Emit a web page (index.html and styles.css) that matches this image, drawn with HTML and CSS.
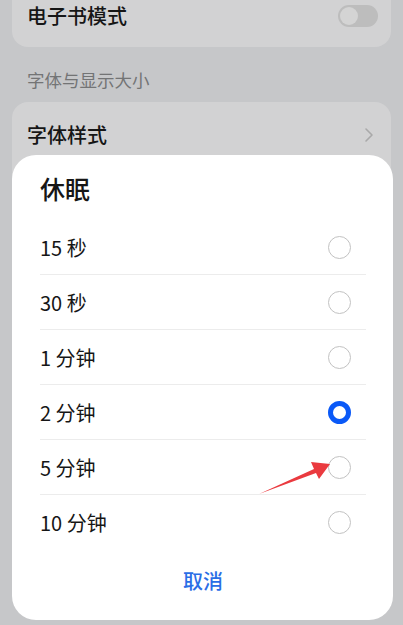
FILE: index.html
```html
<!DOCTYPE html>
<html lang="zh-CN">
<head>
    <meta charset="UTF-8">
    <meta name="viewport" content="width=device-width, initial-scale=1.0">
    <title>休眠</title>
    <link rel="stylesheet" href="styles.css">
</head>
<body>

<div class="settings">
    <div class="card card-top">
        <span class="item-label">电子书模式</span>
        <span class="switch"><span class="knob"></span></span>
    </div>

    <div class="section-title">字体与显示大小</div>

    <div class="card card-font">
        <span class="item-label">字体样式</span>
        <svg class="chevron" width="10" height="16" viewBox="0 0 10 16">
            <path d="M2 2 L8 8 L2 14" fill="none" stroke="#a9a9a9" stroke-width="1.6" stroke-linecap="round" stroke-linejoin="round"/>
        </svg>
    </div>
</div>

<!-- sleep dialog -->
<div class="dialog">
    <h3 class="dialog-title">休眠</h3>
    <ul class="options">
        <li class="option"><span>15 秒</span><span class="radio"></span></li>
        <li class="option"><span>30 秒</span><span class="radio"></span></li>
        <li class="option"><span>1 分钟</span><span class="radio"></span></li>
        <li class="option"><span>2 分钟</span><span class="radio checked"></span></li>
        <li class="option"><span>5 分钟</span><span class="radio"></span></li>
        <li class="option"><span>10 分钟</span><span class="radio"></span></li>
    </ul>
    <button class="cancel-btn">取消</button>
</div>

<svg class="arrow" width="403" height="625" viewBox="0 0 403 625">
    <polygon points="259,494 314,469 311,462 330,464 319,479 316,473" fill="#ea3a3f"/>
</svg>

</body>
</html>
```

FILE: styles.css
```css
body {
    margin: 0;
    padding: 0;
    width: 403px;
    height: 625px;
    overflow: hidden;
    position: relative;
    background-color: #c6c7c9;
    font-family: "Noto Sans CJK SC", "Noto Sans", sans-serif;
    color: #161616;
}
.settings {
    padding: 0 12px;
}
.card {
    background-color: #d2d2d3;
    border-radius: 16px;
    display: flex;
    align-items: center;
    justify-content: space-between;
    padding: 0 15px;
}
.card-top {
    padding-bottom: 15px;
    height: 32px;
    border-radius: 0 0 16px 16px;
}
.card-font {
    height: 66px;
    padding-bottom: 40px;
}
.item-label {
    font-size: 20px;
    font-weight: 500;
    line-height: 32px;
}
.switch {
    width: 40px;
    height: 22px;
    border-radius: 11px;
    background-color: #bdbdbd;
    margin-right: -2px;
    display: flex;
    align-items: center;
    padding-left: 2px;
    box-sizing: border-box;
}
.knob {
    width: 18px;
    height: 18px;
    border-radius: 50%;
    background-color: #d4d4d4;
}
.chevron {
    margin-right: 2px;
}
.section-title {
    font-size: 17.5px;
    color: #737475;
    line-height: 24px;
    padding: 21px 15px 10px;
}

/* Dialog */
.dialog {
    position: absolute;
    top: 155px;
    left: 12px;
    width: 381px;
    height: 465px;
    background-color: #fff;
    border-radius: 24px;
    padding: 0 27px 0 28px;
    box-sizing: border-box;
}
.dialog-title {
    margin: 0;
    font-size: 25px;
    font-weight: 500;
    line-height: 34px;
    padding: 16px 0 15px;
}
.options {
    list-style: none;
    margin: 0;
    padding: 0;
}
.option {
    height: 55px;
    display: flex;
    align-items: center;
    justify-content: space-between;
    font-size: 20px;
    padding-right: 15px;
    border-bottom: 1px solid #ececec;
    box-sizing: border-box;
}
.option:last-child {
    border-bottom: none;
}
.radio {
    width: 23px;
    height: 23px;
    border-radius: 50%;
    border: 1.5px solid #c2c2c2;
    box-sizing: border-box;
}
.radio.checked {
    border: 5px solid #0a59f7;
}
.cancel-btn {
    display: block;
    margin: 11px auto 0;
    background: none;
    border: none;
    font-family: inherit;
    font-size: 20px;
    font-weight: 500;
    color: #2a6ee6;
    padding: 0;
    line-height: 40px;
}
.arrow {
    position: absolute;
    top: 0;
    left: 0;
}
```
